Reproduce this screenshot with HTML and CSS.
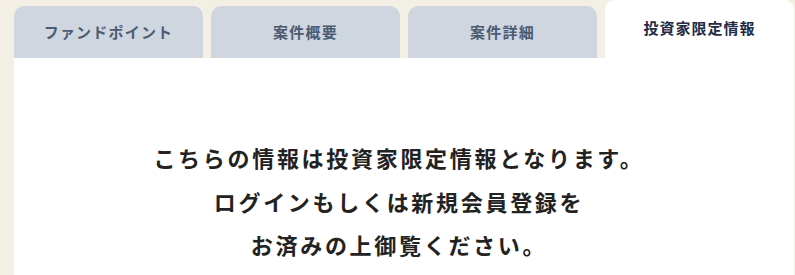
FILE: index.html
```html
<!DOCTYPE html>
<html lang="ja">

<head>
    <meta charset="UTF-8">
    <meta name="viewport" content="width=device-width, initial-scale=1.0">
    <title>投資家限定情報</title>
    <link rel="stylesheet" href="styles.css">
</head>

<body>
    <div id="wrap">
        <ul class="tabs">
            <li>ファンドポイント</li>
            <li>案件概要</li>
            <li>案件詳細</li>
            <li class="active">投資家限定情報</li>
        </ul>
        <div class="panel">
            <p class="notice">こちらの情報は投資家限定情報となります。<br>ログインもしくは新規会員登録を<br>お済みの上御覧ください。</p>
        </div>
    </div>
</body>

</html>
```

FILE: styles.css
```css
* {
    margin: 0;
    padding: 0;
    box-sizing: border-box;
}

body {
    background: #f3efe4;
    font-family: "Noto Sans CJK JP", "Noto Sans", sans-serif;
    height: 275px;
    overflow: hidden;
}

#wrap {
    margin-left: 14px;
    width: 780px;
}

.tabs {
    list-style: none;
    display: flex;
    align-items: flex-end;
    gap: 8px;
    height: 58px;
}

.tabs li {
    flex: 1;
    height: 52px;
    background: #d0d6df;
    border-radius: 10px 10px 0 0;
    color: #4b5b73;
    font-size: 15px;
    font-weight: 700;
    letter-spacing: 0.08em;
    display: flex;
    align-items: center;
    justify-content: center;
    padding-bottom: 1px;
}

.tabs li.active {
    height: 58px;
    background: #fff;
    color: #1f2c45;
    font-size: 15px;
    letter-spacing: 1px;
    padding-bottom: 3px;
}

.panel {
    background: #fff;
    height: 217px;
    padding: 78px 10px 0 0;
}

.notice {
    text-align: center;
    font-size: 22px;
    font-weight: 700;
    line-height: 43.5px;
    letter-spacing: 2.7px;
    color: #222;
}
```
